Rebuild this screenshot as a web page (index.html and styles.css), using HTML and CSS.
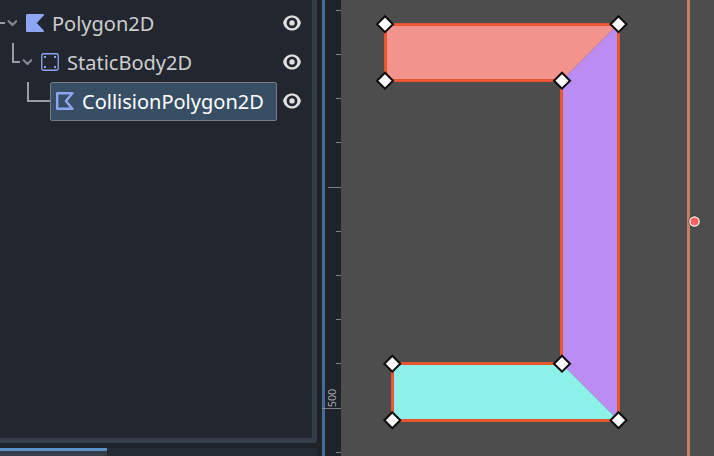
FILE: index.html
```html
<!DOCTYPE html>
<html lang="en">
<head>
<meta charset="utf-8">
<title>Scene editor</title>
<link rel="stylesheet" href="styles.css">
</head>
<body>
<svg class="defs" aria-hidden="true">
  <symbol id="eye" viewBox="0 0 18 16"><path fill="#e0e0e0" fill-rule="evenodd" d="M9 .4C4.7 .4 1.5 3.1.2 7.2v1.2C1.5 12.7 4.7 15.4 9 15.4s7.500-2.700 8.800-7V7.200C16.500 3.100 13.300.4 9 .4ZM9 2.500a5.400 5.400 0 1 1 0 10.800A5.400 5.400 0 0 1 9 2.500ZM9 5.200a2.700 2.700 0 1 0 0 5.400 2.700 2.700 0 0 0 0-5.400Z"/></symbol>
  <symbol id="chevron" viewBox="0 0 10 8"><path d="M1.700 2.200 5.500 6 9.200 2.200" fill="none" stroke="#85888c" stroke-width="2.200" stroke-linecap="round" stroke-linejoin="round"/></symbol>
</svg>
<div class="editor">
  <div class="dock">
    <div class="tree">
      <div class="row">
        <span class="guide root"></span>
        <svg class="chevron"><use href="#chevron"/></svg>
        <svg class="icon" viewBox="0 0 18 18"><path fill="#8da5f3" d="M1 0h16.800v1.600L10.800 9l7 7.400V18H1a1 1 0 0 1-1-1V1a1 1 0 0 1 1-1Z"/></svg>
        <span class="name">Polygon2D</span>
        <svg class="eye"><use href="#eye"/></svg>
      </div>
      <div class="row">
        <span class="guide child"></span>
        <svg class="chevron"><use href="#chevron"/></svg>
        <svg class="icon" viewBox="0 0 18 18"><rect x=".75" y=".75" width="16.500" height="16.500" rx="1.800" fill="none" stroke="#8da5f3" stroke-width="1.300"/><path fill="#8da5f3" d="M3 3h2v2H3zM13 3h2v2h-2zM3 13h2v2H3zM13 13h2v2h-2z"/></svg>
        <span class="name">StaticBody2D</span>
        <svg class="eye"><use href="#eye"/></svg>
      </div>
      <div class="row">
        <span class="guide leaf"></span>
        <div class="selected">
          <svg class="icon" viewBox="0 0 18 18"><path fill="none" stroke="#8da5f3" stroke-width="2.400" stroke-linejoin="round" d="M1.200 1.200h15.200L9.900 9l6.500 7.800H1.200Z"/></svg>
          <span class="name">CollisionPolygon2D</span>
        </div>
        <svg class="eye"><use href="#eye"/></svg>
      </div>
    </div>
    <div class="tabs"><span class="tab"></span></div>
  </div>
  <svg class="ruler" viewBox="0 0 19 456">
    <path d="M14 10.500h5M14 54.500h5M14 98.500h5M14 142.500h5M6 187.500h13M14 231.500h5M14 275.500h5M14 319.500h5M14 363.500h5M0 408.500h19M14 452.500h5" stroke="#7c7f84"/>
    <rect width="3" height="456" fill="#446c94"/>
    <path d="M0 408.500h3" stroke="#7c8c9c"/>
    <text transform="translate(14 407.300) rotate(-90)">500</text>
  </svg>
  <svg class="canvas" viewBox="341 0 373 456">
    <path fill="#f2938c" d="M385 24h233.500l-57 57H385z"/>
    <path fill="#bb8cf2" d="M618.500 24v396.500l-57-57V81z"/>
    <path fill="#8cf2e9" d="M392 363.500h169.500l57 57H392z"/>
    <path class="outline" d="M385.500 24.500h233v396h-226v-57h169V80.500h-176z"/>
    <path class="outline-core" d="M385.500 24.500h233v396h-226v-57h169V80.500h-176z"/>
    <path d="M688.500 0v456" stroke="#c6805e" stroke-width="3"/>
    <g class="handles">
      <path d="m385 16.200 8 8-8 8-8-8z"/>
      <path d="m618.500 16.200 8 8-8 8-8-8z"/>
      <path d="m385 72.700 8 8-8 8-8-8z"/>
      <path d="m562 72.700 8 8-8 8-8-8z"/>
      <path d="m392.300 355.700 8 8-8 8-8-8z"/>
      <path d="m562 355.700 8 8-8 8-8-8z"/>
      <path d="m392.300 412.200 8 8-8 8-8-8z"/>
      <path d="m618.500 412.200 8 8-8 8-8-8z"/>
    </g>
    <circle cx="694.500" cy="221.500" r="6" fill="#303030"/>
    <circle cx="694.500" cy="221.500" r="4.700" fill="#ff5f5f" stroke="#fff" stroke-width="1.300"/>
  </svg>
</div>
</body>
</html>
```
FILE: styles.css
```css
* { box-sizing: border-box; }
body { margin: 0; background: #1e2229; font-family: "Noto Sans", sans-serif; overflow: hidden; }
svg { display: block; flex: none; }
.defs { display: none; }
.editor { display: flex; width: 714px; height: 456px; }
.dock { width: 317px; margin-right: 5px; display: flex; flex-direction: column; gap: 5px; }
.tree {
  height: 443px;
  padding-top: 4px;
  background: #22262f;
  border: solid #363d4a;
  border-width: 0 5px 5px 0;
  border-bottom-right-radius: 3px;
}
.row { display: flex; align-items: center; height: 39px; padding: 0 11px 1px 0; }
.guide { flex: none; }
.root { width: 5px; height: 2px; margin-right: 2px; background: #9a9da1; }
.child, .leaf { align-self: flex-start; height: 20px; border: solid #9a9da1; border-width: 0 0 2px 2px; }
.child { width: 8px; margin: 0 2px 0 12px; }
.leaf { width: 23px; margin-left: 27px; }
.chevron { width: 10px; height: 8px; margin-right: 9px; }
.icon { width: 18px; height: 18px; margin-right: 8px; }
.name { padding-top: 2px; font-size: 20px; line-height: 36px; color: #cdcecf; white-space: nowrap; }
.eye { width: 18px; height: 16px; margin-left: auto; }
.selected {
  display: flex;
  align-items: center;
  align-self: flex-start;
  width: 227px;
  height: 39px;
  padding: 0 0 1px 5px;
  background: #384e65;
  border: 1px solid #777c83;
  border-radius: 2px;
}
.selected .name { line-height: 34px; color: #fff; }
.tabs { height: 8px; background: #252b34; }
.tab { display: block; width: 107px; height: 8px; background: #363d4a; border-top: 3px solid #5b91c5; }
.ruler { width: 19px; height: 456px; background: #1e2229; }
.ruler text { font-size: 10.800px; fill: #a4a6a8; }
.canvas { width: 373px; height: 456px; background: #4d4d4d; }
.outline { fill: none; stroke: #dc5430; stroke-width: 3; }
.outline-core { fill: none; stroke: #fa5a30; stroke-width: 1; }
.handles { fill: #fff; stroke: #0c0c0c; stroke-width: 2; }
```
